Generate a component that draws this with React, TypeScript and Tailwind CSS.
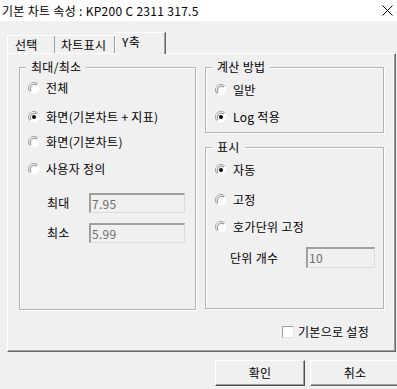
import React from "react";

const Radio = ({ checked = false }: { checked?: boolean }) => (
  <svg width="12" height="12" viewBox="0 0 12 12" className="shrink-0">
    <circle cx="6" cy="6" r="5.5" fill="#ffffff" />
    <path d="M2.1 9.9 A5.5 5.5 0 0 1 9.9 2.1" fill="none" stroke="#a0a0a0" strokeWidth="1" />
    <path d="M3 9 A4.3 4.3 0 0 1 9 3" fill="none" stroke="#696969" strokeWidth="0.8" />
    {checked && <circle cx="6" cy="6" r="2" fill="#000000" />}
  </svg>
);

const RadioRow = ({ label, checked, className }: { label: string; checked?: boolean; className: string }) => (
  <div className={`flex h-[16px] items-center gap-[6px] ${className}`}>
    <Radio checked={checked} />
    <span>{label}</span>
  </div>
);

const Field = ({ value, className }: { value: string; className: string }) => (
  <div
    className={`flex items-center border-t-2 border-l-2 border-r border-b border-t-[#a0a0a0] border-l-[#a0a0a0] border-r-[#dcdcdc] border-b-[#dcdcdc] bg-[#f0f0f0] pl-[1px] text-[#6d6d6d] ${className}`}
  >
    {value}
  </div>
);

const Group = ({ title, className, children }: { title: string; className: string; children: React.ReactNode }) => (
  <div className={`relative border border-[#b4b4b4] shadow-[inset_1px_1px_0_#ffffff,1px_1px_0_#ffffff] ${className}`}>
    <span className="absolute -top-[9px] left-[6px] bg-[#f0f0f0] px-[5px] leading-[16px]">{title}</span>
    {children}
  </div>
);

export default function App() {
  return (
    <div
      className="h-[389px] w-[397px] overflow-hidden bg-[#f0f0f0] text-[12px] leading-[16px] tracking-[0.3px] text-black"
      style={{ fontFamily: '"Noto Sans CJK KR", "Noto Sans", sans-serif' }}
    >
      {/* title bar */}
      <div className="flex h-[21px] items-center justify-between bg-white pl-[2px] pr-[4px]">
        <span>기본 차트 속성 : KP200 C 2311 317.5</span>
        <svg width="11" height="11" viewBox="0 0 11 11">
          <path d="M0.5 0.5 L10.5 10.5 M10.5 0.5 L0.5 10.5" stroke="#000" strokeWidth="1" />
        </svg>
      </div>

      {/* tabs */}
      <div className="mt-[11px] flex h-[21px] items-end pl-[7px]">
        <div className="flex h-[18px] w-[48px] items-center border-l border-t border-white pl-[7px] shadow-[inset_-1px_0_0_#a0a0a0]">
          선택
        </div>
        <div className="flex h-[18px] w-[60px] items-center border-t border-white pl-[6px] shadow-[inset_-1px_0_0_#a0a0a0]">
          차트표시
        </div>
        <div className="relative z-10 -mb-[1px] flex h-[22px] w-[50px] items-start border-l border-t border-white bg-[#f0f0f0] pl-[6px] pt-[1px] shadow-[inset_-1px_0_0_#a0a0a0,1px_0_0_#696969]">
          Y축
        </div>
      </div>

      {/* panel */}
      <div className="ml-[7px] h-[299px] w-[389px] border-l border-t border-r border-b border-l-white border-t-white border-r-[#696969] border-b-[#696969] shadow-[inset_-1px_-1px_0_#a0a0a0]">
        <div className="flex gap-[9px] pl-[11px] pt-[13px]">
          <Group title="최대/최소" className="h-[243px] w-[177px]">
            <div className="flex flex-col pl-[8px]">
              <RadioRow label="전체" className="mt-[12px]" />
              <RadioRow label="화면(기본차트 + 지표)" checked className="mt-[13px]" />
              <RadioRow label="화면(기본차트)" className="mt-[9px]" />
              <RadioRow label="사용자 정의" className="mt-[11px]" />
              <div className="mt-[16px] flex items-center pl-[19px]">
                <span className="w-[42px]">최대</span>
                <Field value="7.95" className="h-[20px] w-[96px]" />
              </div>
              <div className="mt-[10px] flex items-center pl-[19px]">
                <span className="w-[42px]">최소</span>
                <Field value="5.99" className="h-[20px] w-[96px]" />
              </div>
            </div>
          </Group>

          <div className="flex flex-col">
            <Group title="계산 방법" className="h-[66px] w-[179px]">
              <div className="flex flex-col pl-[9px]">
                <RadioRow label="일반" className="mt-[14px]" />
                <RadioRow label="Log 적용" checked className="mt-[11px]" />
              </div>
            </Group>
            <Group title="표시" className="mt-[14px] h-[162px] w-[179px]">
              <div className="flex flex-col pl-[9px]">
                <RadioRow label="자동" checked className="mt-[14px]" />
                <RadioRow label="고정" className="mt-[14px]" />
                <RadioRow label="호가단위 고정" className="mt-[11px]" />
                <div className="mt-[12px] flex items-center pl-[15px]">
                  <span className="w-[76px]">단위 개수</span>
                  <Field value="10" className="h-[21px] w-[69px]" />
                </div>
              </div>
            </Group>
          </div>
        </div>

        <div className="ml-[274px] mt-[14px] flex h-[16px] items-center gap-[4px]">
          <span className="h-[12px] w-[12px] border-t border-l border-r border-b border-t-[#a0a0a0] border-l-[#a0a0a0] border-r-[#e3e3e3] border-b-[#e3e3e3] bg-white" />
          <span>기본으로 설정</span>
        </div>
      </div>

      {/* buttons */}
      <div className="mt-[8px] flex gap-[5px] pl-[215px]">
        <button className="flex h-[26px] w-[90px] shrink-0 items-center justify-center border border-t-white border-l-white border-r-[#505050] border-b-[#505050] bg-[#f0f0f0] shadow-[inset_-1px_-1px_0_#a0a0a0]">
          확인
        </button>
        <button className="flex h-[26px] w-[90px] shrink-0 items-center justify-center border border-t-white border-l-white border-r-[#696969] border-b-[#696969] bg-[#f0f0f0] shadow-[inset_-1px_-1px_0_#a0a0a0]">
          취소
        </button>
      </div>
    </div>
  );
}
